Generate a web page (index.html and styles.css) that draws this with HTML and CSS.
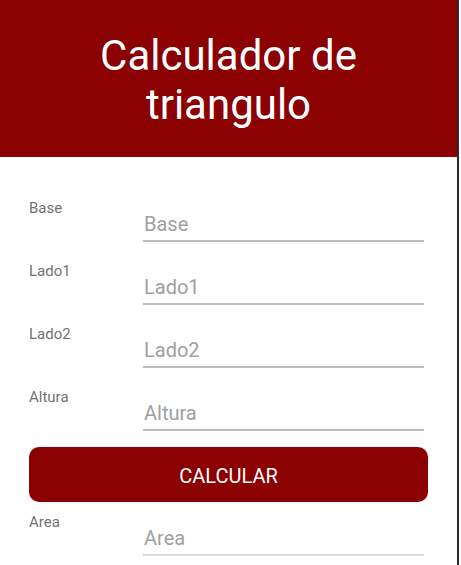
FILE: index.html
```html
<!DOCTYPE html>
<html>
<head>
<meta charset="utf-8">
<link rel="stylesheet" href="styles.css">
</head>
<body>
<div class="screen">
  <header class="header">
    <h1 class="title">Calculador de<br>triangulo</h1>
  </header>
  <main class="form">
    <div class="row">
      <label class="label">Base</label>
      <div class="field"><input class="input" placeholder="Base"></div>
    </div>
    <div class="row">
      <label class="label">Lado1</label>
      <div class="field"><input class="input" placeholder="Lado1"></div>
    </div>
    <div class="row">
      <label class="label">Lado2</label>
      <div class="field"><input class="input" placeholder="Lado2"></div>
    </div>
    <div class="row">
      <label class="label">Altura</label>
      <div class="field"><input class="input" placeholder="Altura"></div>
    </div>
    <button class="button">CALCULAR</button>
    <div class="row">
      <label class="label">Area</label>
      <div class="field"><input class="input input-light" placeholder="Area"></div>
    </div>
  </main>
</div>
</body>
</html>
```
FILE: styles.css
```css
html, body {
  margin: 0;
  padding: 0;
  background: #ffffff;
  height: 565px;
  overflow: hidden;
}
.screen {
  width: 457px;
  height: 565px;
  border-right: 2px solid #2a2a2a;
  font-family: Roboto, "Liberation Sans", sans-serif;
  background: #ffffff;
}
.header {
  height: 157px;
  background: #8b0000;
  display: flex;
  align-items: center;
  justify-content: center;
}
.title {
  margin: 0;
  color: #ffffff;
  font-weight: 400;
  font-size: 42px;
  line-height: 49px;
  text-align: center;
  padding-top: 2px;
}
.form {
  padding: 43px 0 0 29px;
}
.row {
  display: grid;
  grid-template-columns: 114px 281px;
  height: 63px;
}
.label {
  font-size: 15px;
  line-height: 16px;
  color: #737373;
}
.field {
  padding-top: 12px;
}
.input {
  display: block;
  width: 281px;
  box-sizing: border-box;
  border: 0;
  border-bottom: 2px solid #bdbdbd;
  padding: 0 0 4px 1px;
  margin: 0;
  font-family: Roboto, "Liberation Sans", sans-serif;
  font-size: 20px;
  line-height: 24px;
  color: #9e9e9e;
  background: transparent;
  outline: none;
}
.input::placeholder {
  color: #a0a0a0;
}
.input-light {
  border-bottom-color: #dcdcdc;
}
.button {
  display: block;
  width: 399px;
  height: 55px;
  margin: -5px 0 12px 0;
  border: 0;
  border-radius: 10px;
  background: #8b0000;
  color: #ffffff;
  font-family: Roboto, "Liberation Sans", sans-serif;
  font-size: 20px;
  padding: 2px 0 0 0;
}
```
